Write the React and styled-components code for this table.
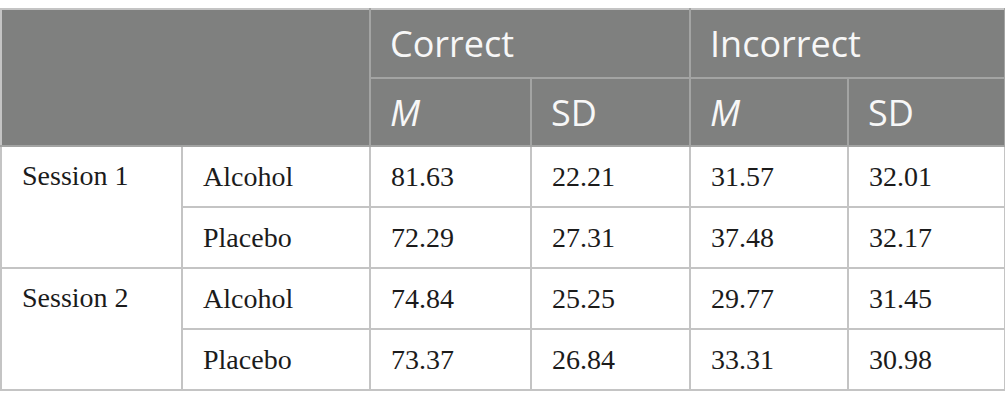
import React from 'react';
import styled, { createGlobalStyle } from 'styled-components';

const GlobalStyle = createGlobalStyle`
  body {
    margin: 0;
    background: #ffffff;
  }
`;

const Wrap = styled.div`
  padding-top: 8px;
`;

const Table = styled.table`
  width: 1004px;
  border-collapse: collapse;
  table-layout: fixed;
  border: 2px solid #c4c4c4;
`;

const HeadCell = styled.th`
  background: #7f807f;
  color: #f7f7f7;
  font-family: 'Open Sans', 'Liberation Sans', sans-serif;
  font-size: 36px;
  font-weight: 400;
  font-style: ${props => (props.italic ? 'italic' : 'normal')};
  text-align: left;
  vertical-align: middle;
  padding: 0 19px;
  border: 2px solid #a3a4a3;
  border-top-color: #c4c4c4;
  &:first-child {
    border-left-color: #c4c4c4;
  }
`;

const HeadRow = styled.tr`
  height: ${props => props.h}px;
`;

const BodyRow = styled.tr`
  height: 61px;
`;

const Cell = styled.td`
  font-family: 'Liberation Serif', 'Times New Roman', serif;
  font-size: 28px;
  color: #1b1b1b;
  text-align: left;
  vertical-align: ${props => (props.top ? 'top' : 'middle')};
  padding: ${props => (props.top ? '13px 20px 0' : '0 20px')};
  border: 2px solid #c4c4c4;
`;

const widths = [181, 188, 161, 159, 158, 157];

const rows = [
  { session: 'Session 1', group: 'Alcohol', values: ['81.63', '22.21', '31.57', '32.01'] },
  { group: 'Placebo', values: ['72.29', '27.31', '37.48', '32.17'] },
  { session: 'Session 2', group: 'Alcohol', values: ['74.84', '25.25', '29.77', '31.45'] },
  { group: 'Placebo', values: ['73.37', '26.84', '33.31', '30.98'] },
];

const App = () => (
  <>
    <GlobalStyle />
    <Wrap>
      <Table>
        <colgroup>
          {widths.map((w, i) => (
            <col key={i} style={{ width: w }} />
          ))}
        </colgroup>
        <thead>
          <HeadRow h={69}>
            <HeadCell colSpan={2} rowSpan={2} />
            <HeadCell colSpan={2}>Correct</HeadCell>
            <HeadCell colSpan={2}>Incorrect</HeadCell>
          </HeadRow>
          <HeadRow h={68}>
            <HeadCell italic>M</HeadCell>
            <HeadCell>SD</HeadCell>
            <HeadCell italic>M</HeadCell>
            <HeadCell>SD</HeadCell>
          </HeadRow>
        </thead>
        <tbody>
          {rows.map((row, i) => (
            <BodyRow key={i}>
              {row.session && (
                <Cell rowSpan={2} top>
                  {row.session}
                </Cell>
              )}
              <Cell>{row.group}</Cell>
              {row.values.map((v, j) => (
                <Cell key={j}>{v}</Cell>
              ))}
            </BodyRow>
          ))}
        </tbody>
      </Table>
    </Wrap>
  </>
);

export default App;
